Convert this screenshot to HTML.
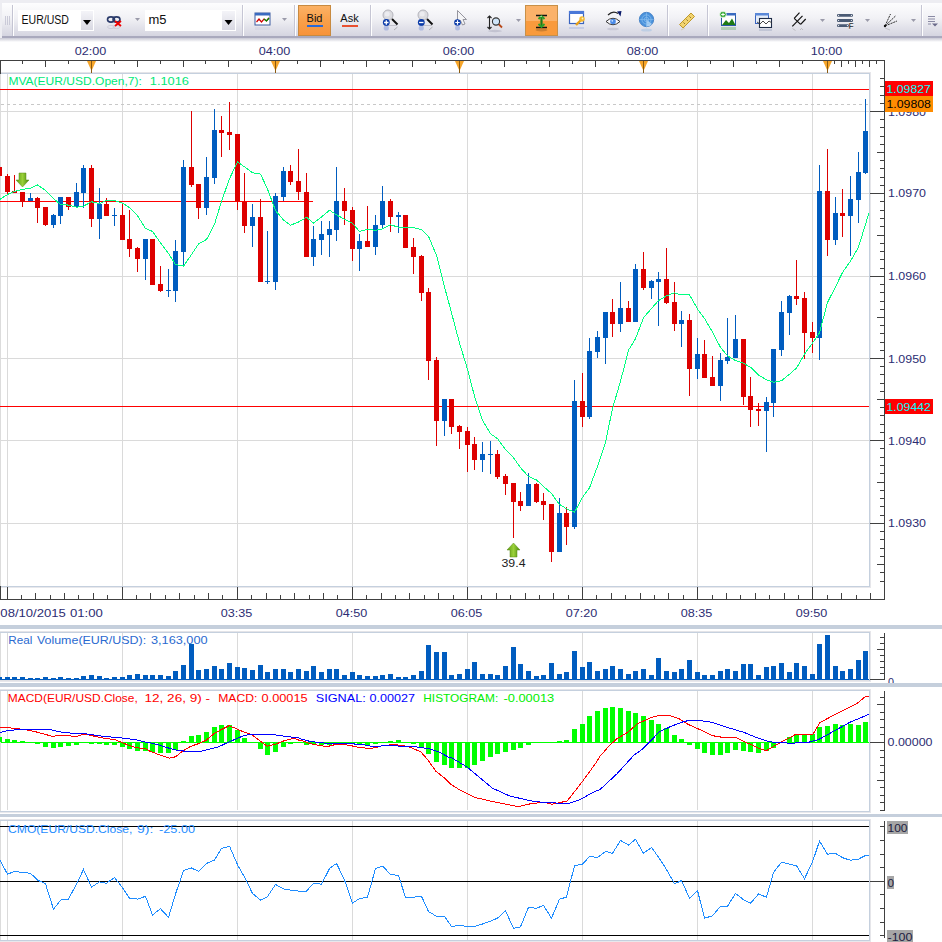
<!DOCTYPE html>
<html><head><meta charset="utf-8"><style>
html,body{margin:0;padding:0;background:#ffffff;width:942px;height:942px;overflow:hidden}
svg{display:block;font-family:"Liberation Sans", sans-serif}
</style></head><body>
<svg width="942" height="942" viewBox="0 0 942 942">
<rect x="0" y="0" width="942" height="942" fill="#ffffff"/>
<defs><linearGradient id="tbg" x1="0" y1="0" x2="0" y2="1"><stop offset="0" stop-color="#fdfdfe"/><stop offset="0.45" stop-color="#f1f1f5"/><stop offset="1" stop-color="#d3d3df"/></linearGradient>
<linearGradient id="org" x1="0" y1="0" x2="0" y2="1"><stop offset="0" stop-color="#fbb266"/><stop offset="0.5" stop-color="#f9a04a"/><stop offset="1" stop-color="#f7923a"/></linearGradient>
<linearGradient id="btng" x1="0" y1="0" x2="0" y2="1"><stop offset="0" stop-color="#f4f4f8"/><stop offset="1" stop-color="#d8d8e2"/></linearGradient>
<linearGradient id="shd" x1="0" y1="0" x2="0" y2="1"><stop offset="0" stop-color="#c8c8d4"/><stop offset="1" stop-color="#ffffff"/></linearGradient></defs>
<rect x="0" y="0" width="942" height="42" fill="#ededf2"/>
<rect x="0" y="38" width="942" height="4" fill="url(#shd)"/>
<rect x="2" y="3" width="940" height="34" fill="url(#tbg)"/>
<rect x="2" y="36" width="940" height="2" fill="#a9a9bd"/>
<rect x="5" y="16" width="1" height="9" fill="#cacad8"/>
<rect x="7" y="16" width="1" height="9" fill="#cacad8"/>
<rect x="9" y="16" width="1" height="9" fill="#cacad8"/>
<rect x="12" y="5" width="1" height="31" fill="#c4c4d2"/><rect x="13" y="5" width="1" height="31" fill="#ffffff"/>
<rect x="18" y="10" width="76" height="21" fill="#ffffff"/>
<rect x="81" y="11" width="12" height="19" fill="url(#btng)"/>
<polygon points="83,20 91,20 87,25" fill="#000"/>
<text x="21.5" y="24" font-size="12.5" fill="#101010" textLength="47.5" lengthAdjust="spacingAndGlyphs">EUR/USD</text>
<g fill="none" stroke="#2a3a6a" stroke-width="1.6"><ellipse cx="111" cy="19.5" rx="3.5" ry="2.6"/><ellipse cx="116.5" cy="19.5" rx="3.5" ry="2.6"/></g>
<g fill="none" stroke="#c0c0d0" stroke-width="1" opacity="0.6"><ellipse cx="111" cy="27" rx="3.5" ry="1.6"/><ellipse cx="116.5" cy="27" rx="3.5" ry="1.6"/></g>
<g stroke="#ee0000" stroke-width="1.8"><line x1="115" y1="21" x2="121" y2="26"/><line x1="121" y1="21" x2="115" y2="26"/></g>
<polygon points="135,18 140,18 137.5,21" fill="#9a9aaa"/>
<rect x="145" y="10" width="91" height="21" fill="#ffffff"/>
<rect x="222" y="11" width="13" height="19" fill="url(#btng)"/>
<polygon points="224.5,20 232.5,20 228.5,25" fill="#000"/>
<text x="148.5" y="24" font-size="12.5" fill="#101010" textLength="18" lengthAdjust="spacingAndGlyphs">m5</text>
<rect x="242" y="5" width="1" height="31" fill="#c6c6d4"/><rect x="243" y="5" width="1" height="31" fill="#ffffff"/>
<rect x="294" y="5" width="1" height="31" fill="#c6c6d4"/><rect x="295" y="5" width="1" height="31" fill="#ffffff"/>
<rect x="370" y="5" width="1" height="31" fill="#c6c6d4"/><rect x="371" y="5" width="1" height="31" fill="#ffffff"/>
<rect x="667" y="5" width="1" height="31" fill="#c6c6d4"/><rect x="668" y="5" width="1" height="31" fill="#ffffff"/>
<rect x="707" y="5" width="1" height="31" fill="#c6c6d4"/><rect x="708" y="5" width="1" height="31" fill="#ffffff"/>
<rect x="921" y="5" width="1" height="31" fill="#c6c6d4"/><rect x="922" y="5" width="1" height="31" fill="#ffffff"/>
<rect x="255" y="13" width="15" height="12" fill="#ffffff" stroke="#3a5aa0" stroke-width="1"/>
<rect x="255" y="13" width="15" height="2.5" fill="#3a6ac0"/>
<polyline points="256.5,22 259,19 261.5,22 264,19 266.5,21 269,18" fill="none" stroke="#d00000" stroke-width="1.2"/>
<polyline points="264,19 266.5,21 269,18" fill="none" stroke="#008800" stroke-width="1.2"/>
<rect x="255" y="27" width="15" height="3" fill="#d0d0e0" opacity="0.5"/>
<polygon points="282,18 287,18 284.5,21" fill="#9a9aaa"/>
<rect x="298.5" y="5.5" width="32" height="30" fill="url(#org)" stroke="#c88a40" stroke-width="1"/>
<text x="314.5" y="22" font-size="11" fill="#101010" text-anchor="middle">Bid</text>
<rect x="307" y="25" width="16" height="2" fill="#2a6ad8"/>
<text x="349.5" y="22" font-size="11" fill="#101010" text-anchor="middle">Ask</text>
<rect x="342" y="25" width="16" height="2" fill="#e85030"/>
<line x1="387" y1="25.5" x2="397" y2="25.5" stroke="#b8b8c4" stroke-width="1" opacity="0.8"/>
<circle cx="388" cy="15" r="5" fill="#dcdce0" stroke="#b4b4bc" stroke-width="1"/>
<circle cx="387.2" cy="14" r="2.5" fill="#ececf0"/>
<line x1="392" y1="19" x2="397.5" y2="24.5" stroke="#111" stroke-width="1.9"/>
<circle cx="386.3" cy="22.5" r="3.4" fill="#0a3aa8"/>
<path d="M384.1,22.5 h4.4 M386.3,20.3 v4.4" stroke="#fff" stroke-width="1.3"/>
<circle cx="386.3" cy="28" r="2.6" fill="#7890d8" opacity="0.45"/>
<line x1="394" y1="30" x2="397.5" y2="27" stroke="#555" stroke-width="1" opacity="0.35"/>
<line x1="422" y1="25.5" x2="432" y2="25.5" stroke="#b8b8c4" stroke-width="1" opacity="0.8"/>
<circle cx="423" cy="15" r="5" fill="#dcdce0" stroke="#b4b4bc" stroke-width="1"/>
<circle cx="422.2" cy="14" r="2.5" fill="#ececf0"/>
<line x1="427" y1="19" x2="432.5" y2="24.5" stroke="#111" stroke-width="1.9"/>
<circle cx="421.3" cy="22.5" r="3.4" fill="#0a3aa8"/>
<path d="M419.1,22.5 h4.4" stroke="#fff" stroke-width="1.3"/>
<circle cx="421.3" cy="28" r="2.6" fill="#7890d8" opacity="0.45"/>
<line x1="429" y1="30" x2="432.5" y2="27" stroke="#555" stroke-width="1" opacity="0.35"/>
<polygon points="457.5,10.5 466.5,19.5 463,19.5 465,24 462.5,25 460.5,20.5 457.5,23" fill="#f4f4f6" stroke="#8a8a94" stroke-width="0.9"/>
<circle cx="457.5" cy="22.5" r="3.3" fill="#0a3aa8"/><path d="M455.3,22.5 h4.4 M457.5,20.3 v4.4" stroke="#fff" stroke-width="1.2"/>
<circle cx="457.5" cy="28" r="2.5" fill="#7890d8" opacity="0.45"/>
<path d="M489.5,16 v13 M487.5,18 l2,-2 l2,2 M487.5,27 l2,2 l2,-2" fill="none" stroke="#222" stroke-width="1.1"/>
<line x1="498.5" y1="24" x2="502" y2="27.5" stroke="#b84818" stroke-width="1.8"/>
<circle cx="496" cy="21.5" r="3.6" fill="#cfe4f8" stroke="#333" stroke-width="1.1"/>
<ellipse cx="495" cy="31" rx="7" ry="1.2" fill="#8888a0" opacity="0.3"/>
<polygon points="516,19 521,19 518.5,22" fill="#9a9aaa"/>
<rect x="525.5" y="5.5" width="32" height="30" fill="#f99a3c" stroke="#c89048" stroke-width="1"/>
<rect x="526" y="6" width="31" height="15" fill="#fbb26a"/>
<path d="M536,15.5 h11 M536,27.5 h11" stroke="#111" stroke-width="1.3" fill="none"/>
<path d="M541.5,16 v11" stroke="#1a7a1a" stroke-width="2.2" fill="none"/>
<path d="M538.5,19 l3,-3 l3,3 M538.5,24 l3,3 l3,-3" stroke="#2aa02a" stroke-width="1.8" fill="none"/>
<path d="M540.5,17 l1,-1" stroke="#ffffff" stroke-width="1"/>
<ellipse cx="541.5" cy="30" rx="6" ry="1.5" fill="#7a5020" opacity="0.35"/>
<rect x="569.5" y="11.5" width="14" height="12" fill="#ffffff" stroke="#3a64c0" stroke-width="1.2"/>
<rect x="569" y="11" width="15" height="3" fill="#4a78d8"/>
<path d="M576,25 l5,-5" stroke="#e8a018" stroke-width="2.4"/><circle cx="582" cy="19" r="2.7" fill="#f4b830"/><circle cx="582.5" cy="18.5" r="0.9" fill="#fff4c0"/>
<rect x="569" y="27" width="15" height="2" fill="#9ab0e0" opacity="0.4"/>
<path d="M606,21.5 q7,-6.5 14,0 q-7,6.5 -14,0 z" fill="#f8f8fc" stroke="#333" stroke-width="1"/>
<circle cx="613" cy="21.5" r="2.8" fill="#4a8ae8"/><circle cx="612.3" cy="20.8" r="0.9" fill="#c8e0ff"/>
<path d="M608,15 q5,-5 10,-1.5" fill="none" stroke="#222" stroke-width="1.2"/><polygon points="617,11.5 621.5,11 620.5,16.5" fill="#0a1a6a"/>
<ellipse cx="613" cy="29" rx="6" ry="1.3" fill="#a0a0b8" opacity="0.35"/>
<circle cx="646.5" cy="19.5" r="7.2" fill="#4a92dc" stroke="#3a78c0" stroke-width="0.8"/>
<path d="M646.5,19.5 L652,24 A7,7 0 0 1 646.5,26.5 z" fill="#bcdcf8" opacity="0.8"/>
<circle cx="646.5" cy="19.5" r="4.6" fill="none" stroke="#8cc0ee" stroke-width="0.7"/><circle cx="646.5" cy="19.5" r="2.2" fill="none" stroke="#8cc0ee" stroke-width="0.7"/>
<path d="M639.5,19.5 h14 M646.5,12.5 v14" stroke="#8cc0ee" stroke-width="0.6"/>
<ellipse cx="646.5" cy="30" rx="5.5" ry="1.6" fill="#90b8e0" opacity="0.4"/>
<path d="M679.5,24.5 l11.5,-11.5 l3.5,3.5 l-11.5,11.5 z" fill="#f2d470" stroke="#b8901c" stroke-width="0.9"/>
<path d="M683.5,22.5 l1.3,1.3 M686.5,19.5 l1.3,1.3 M689.5,16.5 l1.3,1.3" stroke="#7a5a10" stroke-width="0.9"/>
<path d="M681,30 l4,-2" stroke="#c0a040" stroke-width="1" opacity="0.3"/>
<rect x="721.5" y="13.5" width="14" height="12" fill="#ffffff" stroke="#2a5aa8" stroke-width="1"/>
<rect x="721" y="13" width="15" height="2.5" fill="#3a6ac0"/>
<path d="M722,25 l4,-5 l3,3 l3,-4.5 l3.5,6.5 z" fill="#1e7a14"/>
<circle cx="723" cy="14.5" r="3.3" fill="#34a834" stroke="#fff" stroke-width="0.8"/><path d="M721.2,14.5 h3.6 M723,12.7 v3.6" stroke="#fff" stroke-width="1"/>
<rect x="721" y="27" width="15" height="3" fill="#3a9a3a" opacity="0.3"/>
<rect x="755.5" y="13.5" width="13" height="10" fill="#e4ecf8" stroke="#3a64c0" stroke-width="1"/>
<rect x="755" y="13" width="14" height="2.5" fill="#5a88d8"/>
<rect x="759.5" y="18.5" width="12" height="9" fill="#ffffff" stroke="#1e2c48" stroke-width="1.1"/>
<polyline points="757,22 760,24 763,21 766,24 769,21 772,23" fill="none" stroke="#333" stroke-width="0.9"/>
<rect x="759" y="29" width="13" height="2" fill="#8090b0" opacity="0.3"/>
<path d="M792.3,26.3 L797.4,21.2 M794.2,18.4 L800.6,24.4 M794.2,18.4 L799.5,12.6 M797.4,21.2 L802.5,15.8 M800.6,24.4 L805.7,19" fill="none" stroke="#111" stroke-width="1.2"/>
<path d="M792.5,28.5 l3,2 M800,30 l1.5,-1.5 l1.5,1.5" fill="none" stroke="#888" stroke-width="0.8" opacity="0.5"/>
<polygon points="820,19 825,19 822.5,22" fill="#9a9aaa"/>
<rect x="837" y="13.9" width="16" height="2.8" rx="1.2" fill="#4a5a74"/>
<circle cx="838.6" cy="15.3" r="0.6" fill="#fff"/><circle cx="851.4" cy="15.3" r="0.6" fill="#fff"/>
<rect x="837" y="19.1" width="16" height="2.8" rx="1.2" fill="#4a5a74"/>
<circle cx="838.6" cy="20.5" r="0.6" fill="#fff"/><circle cx="851.4" cy="20.5" r="0.6" fill="#fff"/>
<rect x="837" y="24.200000000000003" width="12" height="2.8" rx="1.2" fill="#4a5a74"/>
<circle cx="838.6" cy="25.6" r="0.6" fill="#fff"/><circle cx="847.4" cy="25.6" r="0.6" fill="#fff"/>
<text x="848.5" y="28.5" font-size="8.5" font-weight="bold" fill="#000" stroke="#fff" stroke-width="0.3">F</text>
<polygon points="865,19 870,19 867.5,22" fill="#9a9aaa"/>
<path d="M885,26 L890.5,14 M885,26 L896,15.5 M885,26 L897,21" fill="none" stroke="#333" stroke-width="1" stroke-dasharray="2.2,0.8"/>
<circle cx="885" cy="26" r="1.2" fill="#111"/>
<path d="M885,28 l5,2" stroke="#888" stroke-width="1" opacity="0.35"/>
<polygon points="911,19 916,19 913.5,22" fill="#9a9aaa"/>
<path d="M928,16.5 h7 M928,19 h7 M928,21.5 h7 M928,24 h3" stroke="#8a8aa4" stroke-width="1"/><polygon points="932,23.5 938,23.5 935,26.5" fill="#6a6a8a"/>
<g shape-rendering="crispEdges">
<line x1="7.5" y1="74" x2="7.5" y2="586" stroke="#dadada" stroke-width="1" />
<line x1="122.5" y1="74" x2="122.5" y2="586" stroke="#dadada" stroke-width="1" />
<line x1="237.5" y1="74" x2="237.5" y2="586" stroke="#dadada" stroke-width="1" />
<line x1="352.5" y1="74" x2="352.5" y2="586" stroke="#dadada" stroke-width="1" />
<line x1="467.5" y1="74" x2="467.5" y2="586" stroke="#dadada" stroke-width="1" />
<line x1="582.5" y1="74" x2="582.5" y2="586" stroke="#dadada" stroke-width="1" />
<line x1="697.5" y1="74" x2="697.5" y2="586" stroke="#dadada" stroke-width="1" />
<line x1="812.5" y1="74" x2="812.5" y2="586" stroke="#dadada" stroke-width="1" />
<line x1="7.5" y1="633" x2="7.5" y2="679" stroke="#dadada" stroke-width="1" />
<line x1="122.5" y1="633" x2="122.5" y2="679" stroke="#dadada" stroke-width="1" />
<line x1="237.5" y1="633" x2="237.5" y2="679" stroke="#dadada" stroke-width="1" />
<line x1="352.5" y1="633" x2="352.5" y2="679" stroke="#dadada" stroke-width="1" />
<line x1="467.5" y1="633" x2="467.5" y2="679" stroke="#dadada" stroke-width="1" />
<line x1="582.5" y1="633" x2="582.5" y2="679" stroke="#dadada" stroke-width="1" />
<line x1="697.5" y1="633" x2="697.5" y2="679" stroke="#dadada" stroke-width="1" />
<line x1="812.5" y1="633" x2="812.5" y2="679" stroke="#dadada" stroke-width="1" />
<line x1="7.5" y1="691" x2="7.5" y2="810" stroke="#dadada" stroke-width="1" />
<line x1="122.5" y1="691" x2="122.5" y2="810" stroke="#dadada" stroke-width="1" />
<line x1="237.5" y1="691" x2="237.5" y2="810" stroke="#dadada" stroke-width="1" />
<line x1="352.5" y1="691" x2="352.5" y2="810" stroke="#dadada" stroke-width="1" />
<line x1="467.5" y1="691" x2="467.5" y2="810" stroke="#dadada" stroke-width="1" />
<line x1="582.5" y1="691" x2="582.5" y2="810" stroke="#dadada" stroke-width="1" />
<line x1="697.5" y1="691" x2="697.5" y2="810" stroke="#dadada" stroke-width="1" />
<line x1="812.5" y1="691" x2="812.5" y2="810" stroke="#dadada" stroke-width="1" />
<line x1="7.5" y1="821" x2="7.5" y2="940" stroke="#dadada" stroke-width="1" />
<line x1="122.5" y1="821" x2="122.5" y2="940" stroke="#dadada" stroke-width="1" />
<line x1="237.5" y1="821" x2="237.5" y2="940" stroke="#dadada" stroke-width="1" />
<line x1="352.5" y1="821" x2="352.5" y2="940" stroke="#dadada" stroke-width="1" />
<line x1="467.5" y1="821" x2="467.5" y2="940" stroke="#dadada" stroke-width="1" />
<line x1="582.5" y1="821" x2="582.5" y2="940" stroke="#dadada" stroke-width="1" />
<line x1="697.5" y1="821" x2="697.5" y2="940" stroke="#dadada" stroke-width="1" />
<line x1="812.5" y1="821" x2="812.5" y2="940" stroke="#dadada" stroke-width="1" />
<line x1="1" y1="111.5" x2="869" y2="111.5" stroke="#dadada" stroke-width="1" />
<line x1="1" y1="193.5" x2="869" y2="193.5" stroke="#dadada" stroke-width="1" />
<line x1="1" y1="276.5" x2="869" y2="276.5" stroke="#dadada" stroke-width="1" />
<line x1="1" y1="358.5" x2="869" y2="358.5" stroke="#dadada" stroke-width="1" />
<line x1="1" y1="440.5" x2="869" y2="440.5" stroke="#dadada" stroke-width="1" />
<line x1="1" y1="523.5" x2="869" y2="523.5" stroke="#dadada" stroke-width="1" />
<line x1="1" y1="104.5" x2="869" y2="104.5" stroke="#c8c8c8" stroke-width="1" stroke-dasharray="3,3"/>
<line x1="0" y1="72.5" x2="871" y2="72.5" stroke="#e4e4e8" stroke-width="1" />
<line x1="0" y1="73.5" x2="870" y2="73.5" stroke="#c5d0de" stroke-width="1" />
<line x1="0" y1="586.5" x2="870" y2="586.5" stroke="#c5d0de" stroke-width="1" />
<line x1="0" y1="587.5" x2="871" y2="587.5" stroke="#e8e8ec" stroke-width="1" />
<line x1="869.5" y1="73" x2="869.5" y2="587" stroke="#c5d0de" stroke-width="1" />
<line x1="870.5" y1="72" x2="870.5" y2="588" stroke="#e6e6ea" stroke-width="1" />
<line x1="0.5" y1="74" x2="0.5" y2="586" stroke="#dcdcdc" stroke-width="1" />
<line x1="0" y1="631.5" x2="871" y2="631.5" stroke="#e4e4e8" stroke-width="1" />
<line x1="0" y1="632.5" x2="870" y2="632.5" stroke="#c5d0de" stroke-width="1" />
<line x1="0" y1="680.5" x2="870" y2="680.5" stroke="#e0e0e4" stroke-width="1" />
<line x1="0" y1="681.5" x2="871" y2="681.5" stroke="#e8e8ec" stroke-width="1" />
<line x1="869.5" y1="632" x2="869.5" y2="681" stroke="#c5d0de" stroke-width="1" />
<line x1="870.5" y1="631" x2="870.5" y2="682" stroke="#e6e6ea" stroke-width="1" />
<line x1="0.5" y1="633" x2="0.5" y2="680" stroke="#dcdcdc" stroke-width="1" />
<line x1="0" y1="689.5" x2="871" y2="689.5" stroke="#e4e4e8" stroke-width="1" />
<line x1="0" y1="690.5" x2="870" y2="690.5" stroke="#c5d0de" stroke-width="1" />
<line x1="0" y1="811.5" x2="870" y2="811.5" stroke="#c5d0de" stroke-width="1" />
<line x1="0" y1="812.5" x2="871" y2="812.5" stroke="#e8e8ec" stroke-width="1" />
<line x1="869.5" y1="690" x2="869.5" y2="812" stroke="#c5d0de" stroke-width="1" />
<line x1="870.5" y1="689" x2="870.5" y2="813" stroke="#e6e6ea" stroke-width="1" />
<line x1="0.5" y1="691" x2="0.5" y2="811" stroke="#dcdcdc" stroke-width="1" />
<line x1="0" y1="819.5" x2="871" y2="819.5" stroke="#e4e4e8" stroke-width="1" />
<line x1="0" y1="820.5" x2="870" y2="820.5" stroke="#c5d0de" stroke-width="1" />
<line x1="0" y1="940.5" x2="870" y2="940.5" stroke="#c5d0de" stroke-width="1" />
<line x1="0" y1="941.5" x2="871" y2="941.5" stroke="#e8e8ec" stroke-width="1" />
<line x1="869.5" y1="820" x2="869.5" y2="941" stroke="#c5d0de" stroke-width="1" />
<line x1="870.5" y1="819" x2="870.5" y2="942" stroke="#e6e6ea" stroke-width="1" />
<line x1="0.5" y1="821" x2="0.5" y2="940" stroke="#dcdcdc" stroke-width="1" />
<line x1="0" y1="89.5" x2="869" y2="89.5" stroke="#ff0000" stroke-width="1" />
<line x1="0" y1="406.5" x2="869" y2="406.5" stroke="#ff0000" stroke-width="1" />
<line x1="0" y1="201.5" x2="313" y2="201.5" stroke="#ff0000" stroke-width="1" />
</g>
<g shape-rendering="crispEdges">
<rect x="-1" y="167" width="1" height="9" fill="#dd0000" />
<rect x="-3" y="167" width="5" height="9" fill="#dd0000" />
<rect x="7" y="174" width="1" height="21" fill="#dd0000" />
<rect x="5" y="176" width="5" height="16" fill="#dd0000" />
<rect x="14" y="175" width="1" height="18" fill="#dd0000" />
<rect x="12" y="191" width="5" height="2" fill="#dd0000" />
<rect x="22" y="192" width="1" height="15" fill="#dd0000" />
<rect x="20" y="192" width="5" height="10" fill="#dd0000" />
<rect x="30" y="193" width="1" height="8" fill="#005cbf" />
<rect x="28" y="198" width="5" height="3" fill="#005cbf" />
<rect x="37" y="197" width="1" height="26" fill="#dd0000" />
<rect x="35" y="198" width="5" height="10" fill="#dd0000" />
<rect x="45" y="207" width="1" height="19" fill="#dd0000" />
<rect x="43" y="207" width="5" height="18" fill="#dd0000" />
<rect x="53" y="214" width="1" height="14" fill="#005cbf" />
<rect x="51" y="215" width="5" height="10" fill="#005cbf" />
<rect x="60" y="197" width="1" height="27" fill="#005cbf" />
<rect x="58" y="197" width="5" height="19" fill="#005cbf" />
<rect x="68" y="197" width="1" height="13" fill="#dd0000" />
<rect x="66" y="197" width="5" height="10" fill="#dd0000" />
<rect x="76" y="183" width="1" height="24" fill="#005cbf" />
<rect x="74" y="192" width="5" height="15" fill="#005cbf" />
<rect x="83" y="165" width="1" height="43" fill="#005cbf" />
<rect x="81" y="168" width="5" height="25" fill="#005cbf" />
<rect x="91" y="165" width="1" height="62" fill="#dd0000" />
<rect x="89" y="168" width="5" height="51" fill="#dd0000" />
<rect x="99" y="188" width="1" height="51" fill="#005cbf" />
<rect x="97" y="204" width="5" height="15" fill="#005cbf" />
<rect x="106" y="198" width="1" height="18" fill="#dd0000" />
<rect x="104" y="204" width="5" height="12" fill="#dd0000" />
<rect x="114" y="208" width="1" height="18" fill="#005cbf" />
<rect x="112" y="215" width="5" height="1" fill="#005cbf" />
<rect x="122" y="203" width="1" height="37" fill="#dd0000" />
<rect x="120" y="215" width="5" height="25" fill="#dd0000" />
<rect x="129" y="210" width="1" height="47" fill="#dd0000" />
<rect x="127" y="239" width="5" height="10" fill="#dd0000" />
<rect x="137" y="247" width="1" height="25" fill="#dd0000" />
<rect x="135" y="248" width="5" height="11" fill="#dd0000" />
<rect x="145" y="239" width="1" height="41" fill="#005cbf" />
<rect x="143" y="239" width="5" height="20" fill="#005cbf" />
<rect x="152" y="239" width="1" height="46" fill="#dd0000" />
<rect x="150" y="239" width="5" height="46" fill="#dd0000" />
<rect x="160" y="266" width="1" height="26" fill="#dd0000" />
<rect x="158" y="284" width="5" height="7" fill="#dd0000" />
<rect x="168" y="269" width="1" height="28" fill="#005cbf" />
<rect x="166" y="290" width="5" height="1" fill="#005cbf" />
<rect x="175" y="240" width="1" height="62" fill="#005cbf" />
<rect x="173" y="251" width="5" height="40" fill="#005cbf" />
<rect x="183" y="160" width="1" height="106" fill="#005cbf" />
<rect x="181" y="167" width="5" height="85" fill="#005cbf" />
<rect x="191" y="111" width="1" height="76" fill="#dd0000" />
<rect x="189" y="167" width="5" height="18" fill="#dd0000" />
<rect x="198" y="184" width="1" height="35" fill="#dd0000" />
<rect x="196" y="184" width="5" height="24" fill="#dd0000" />
<rect x="206" y="157" width="1" height="58" fill="#005cbf" />
<rect x="204" y="177" width="5" height="31" fill="#005cbf" />
<rect x="214" y="109" width="1" height="75" fill="#005cbf" />
<rect x="212" y="130" width="5" height="48" fill="#005cbf" />
<rect x="221" y="116" width="1" height="41" fill="#dd0000" />
<rect x="219" y="130" width="5" height="3" fill="#dd0000" />
<rect x="229" y="102" width="1" height="48" fill="#dd0000" />
<rect x="227" y="132" width="5" height="3" fill="#dd0000" />
<rect x="237" y="134" width="1" height="76" fill="#dd0000" />
<rect x="235" y="134" width="5" height="67" fill="#dd0000" />
<rect x="244" y="173" width="1" height="60" fill="#dd0000" />
<rect x="242" y="202" width="5" height="24" fill="#dd0000" />
<rect x="252" y="204" width="1" height="43" fill="#005cbf" />
<rect x="250" y="217" width="5" height="9" fill="#005cbf" />
<rect x="260" y="199" width="1" height="83" fill="#dd0000" />
<rect x="258" y="217" width="5" height="65" fill="#dd0000" />
<rect x="267" y="231" width="1" height="53" fill="#005cbf" />
<rect x="265" y="281" width="5" height="1" fill="#005cbf" />
<rect x="275" y="193" width="1" height="97" fill="#005cbf" />
<rect x="273" y="196" width="5" height="86" fill="#005cbf" />
<rect x="283" y="167" width="1" height="34" fill="#005cbf" />
<rect x="281" y="171" width="5" height="26" fill="#005cbf" />
<rect x="290" y="165" width="1" height="20" fill="#dd0000" />
<rect x="288" y="171" width="5" height="11" fill="#dd0000" />
<rect x="298" y="149" width="1" height="51" fill="#dd0000" />
<rect x="296" y="181" width="5" height="11" fill="#dd0000" />
<rect x="306" y="173" width="1" height="84" fill="#dd0000" />
<rect x="304" y="192" width="5" height="65" fill="#dd0000" />
<rect x="313" y="226" width="1" height="40" fill="#005cbf" />
<rect x="311" y="239" width="5" height="18" fill="#005cbf" />
<rect x="321" y="221" width="1" height="34" fill="#005cbf" />
<rect x="319" y="234" width="5" height="6" fill="#005cbf" />
<rect x="329" y="221" width="1" height="36" fill="#005cbf" />
<rect x="327" y="229" width="5" height="6" fill="#005cbf" />
<rect x="336" y="167" width="1" height="74" fill="#005cbf" />
<rect x="334" y="201" width="5" height="29" fill="#005cbf" />
<rect x="344" y="188" width="1" height="37" fill="#dd0000" />
<rect x="342" y="201" width="5" height="10" fill="#dd0000" />
<rect x="352" y="207" width="1" height="54" fill="#dd0000" />
<rect x="350" y="210" width="5" height="39" fill="#dd0000" />
<rect x="359" y="234" width="1" height="37" fill="#005cbf" />
<rect x="357" y="241" width="5" height="8" fill="#005cbf" />
<rect x="367" y="206" width="1" height="41" fill="#dd0000" />
<rect x="365" y="241" width="5" height="6" fill="#dd0000" />
<rect x="375" y="215" width="1" height="40" fill="#005cbf" />
<rect x="373" y="225" width="5" height="22" fill="#005cbf" />
<rect x="382" y="186" width="1" height="42" fill="#005cbf" />
<rect x="380" y="201" width="5" height="24" fill="#005cbf" />
<rect x="390" y="199" width="1" height="33" fill="#dd0000" />
<rect x="388" y="201" width="5" height="16" fill="#dd0000" />
<rect x="398" y="212" width="1" height="21" fill="#005cbf" />
<rect x="396" y="215" width="5" height="2" fill="#005cbf" />
<rect x="405" y="215" width="1" height="33" fill="#dd0000" />
<rect x="403" y="215" width="5" height="33" fill="#dd0000" />
<rect x="413" y="238" width="1" height="36" fill="#dd0000" />
<rect x="411" y="247" width="5" height="10" fill="#dd0000" />
<rect x="421" y="255" width="1" height="46" fill="#dd0000" />
<rect x="419" y="256" width="5" height="37" fill="#dd0000" />
<rect x="428" y="288" width="1" height="92" fill="#dd0000" />
<rect x="426" y="292" width="5" height="69" fill="#dd0000" />
<rect x="436" y="357" width="1" height="89" fill="#dd0000" />
<rect x="434" y="360" width="5" height="61" fill="#dd0000" />
<rect x="444" y="399" width="1" height="37" fill="#005cbf" />
<rect x="442" y="399" width="5" height="22" fill="#005cbf" />
<rect x="451" y="399" width="1" height="35" fill="#dd0000" />
<rect x="449" y="399" width="5" height="28" fill="#dd0000" />
<rect x="459" y="425" width="1" height="24" fill="#dd0000" />
<rect x="457" y="426" width="5" height="6" fill="#dd0000" />
<rect x="467" y="427" width="1" height="45" fill="#dd0000" />
<rect x="465" y="431" width="5" height="14" fill="#dd0000" />
<rect x="474" y="437" width="1" height="33" fill="#dd0000" />
<rect x="472" y="444" width="5" height="16" fill="#dd0000" />
<rect x="482" y="442" width="1" height="30" fill="#005cbf" />
<rect x="480" y="454" width="5" height="6" fill="#005cbf" />
<rect x="490" y="441" width="1" height="33" fill="#005cbf" />
<rect x="488" y="454" width="5" height="1" fill="#005cbf" />
<rect x="497" y="450" width="1" height="29" fill="#dd0000" />
<rect x="495" y="454" width="5" height="23" fill="#dd0000" />
<rect x="505" y="474" width="1" height="21" fill="#dd0000" />
<rect x="503" y="476" width="5" height="8" fill="#dd0000" />
<rect x="513" y="483" width="1" height="55" fill="#dd0000" />
<rect x="511" y="483" width="5" height="19" fill="#dd0000" />
<rect x="520" y="492" width="1" height="19" fill="#dd0000" />
<rect x="518" y="501" width="5" height="5" fill="#dd0000" />
<rect x="528" y="473" width="1" height="33" fill="#005cbf" />
<rect x="526" y="484" width="5" height="22" fill="#005cbf" />
<rect x="536" y="483" width="1" height="20" fill="#dd0000" />
<rect x="534" y="484" width="5" height="18" fill="#dd0000" />
<rect x="543" y="493" width="1" height="27" fill="#dd0000" />
<rect x="541" y="501" width="5" height="4" fill="#dd0000" />
<rect x="551" y="504" width="1" height="58" fill="#dd0000" />
<rect x="549" y="504" width="5" height="48" fill="#dd0000" />
<rect x="559" y="498" width="1" height="54" fill="#005cbf" />
<rect x="557" y="513" width="5" height="39" fill="#005cbf" />
<rect x="566" y="507" width="1" height="38" fill="#dd0000" />
<rect x="564" y="513" width="5" height="14" fill="#dd0000" />
<rect x="574" y="380" width="1" height="149" fill="#005cbf" />
<rect x="572" y="401" width="5" height="126" fill="#005cbf" />
<rect x="582" y="373" width="1" height="54" fill="#dd0000" />
<rect x="580" y="401" width="5" height="16" fill="#dd0000" />
<rect x="589" y="338" width="1" height="81" fill="#005cbf" />
<rect x="587" y="351" width="5" height="66" fill="#005cbf" />
<rect x="597" y="331" width="1" height="27" fill="#005cbf" />
<rect x="595" y="337" width="5" height="15" fill="#005cbf" />
<rect x="605" y="312" width="1" height="52" fill="#005cbf" />
<rect x="603" y="312" width="5" height="26" fill="#005cbf" />
<rect x="612" y="299" width="1" height="38" fill="#dd0000" />
<rect x="610" y="312" width="5" height="12" fill="#dd0000" />
<rect x="620" y="282" width="1" height="50" fill="#005cbf" />
<rect x="618" y="308" width="5" height="16" fill="#005cbf" />
<rect x="628" y="301" width="1" height="21" fill="#dd0000" />
<rect x="626" y="308" width="5" height="14" fill="#dd0000" />
<rect x="635" y="264" width="1" height="58" fill="#005cbf" />
<rect x="633" y="269" width="5" height="53" fill="#005cbf" />
<rect x="643" y="252" width="1" height="38" fill="#dd0000" />
<rect x="641" y="269" width="5" height="19" fill="#dd0000" />
<rect x="651" y="280" width="1" height="19" fill="#005cbf" />
<rect x="649" y="281" width="5" height="7" fill="#005cbf" />
<rect x="658" y="272" width="1" height="54" fill="#005cbf" />
<rect x="656" y="279" width="5" height="3" fill="#005cbf" />
<rect x="666" y="248" width="1" height="56" fill="#dd0000" />
<rect x="664" y="279" width="5" height="24" fill="#dd0000" />
<rect x="674" y="282" width="1" height="49" fill="#dd0000" />
<rect x="672" y="302" width="5" height="22" fill="#dd0000" />
<rect x="681" y="311" width="1" height="36" fill="#005cbf" />
<rect x="679" y="320" width="5" height="4" fill="#005cbf" />
<rect x="689" y="314" width="1" height="82" fill="#dd0000" />
<rect x="687" y="320" width="5" height="49" fill="#dd0000" />
<rect x="697" y="338" width="1" height="41" fill="#005cbf" />
<rect x="695" y="354" width="5" height="15" fill="#005cbf" />
<rect x="704" y="340" width="1" height="38" fill="#dd0000" />
<rect x="702" y="354" width="5" height="24" fill="#dd0000" />
<rect x="712" y="356" width="1" height="30" fill="#dd0000" />
<rect x="710" y="377" width="5" height="9" fill="#dd0000" />
<rect x="720" y="353" width="1" height="48" fill="#005cbf" />
<rect x="718" y="360" width="5" height="26" fill="#005cbf" />
<rect x="727" y="318" width="1" height="46" fill="#005cbf" />
<rect x="725" y="357" width="5" height="4" fill="#005cbf" />
<rect x="735" y="315" width="1" height="43" fill="#005cbf" />
<rect x="733" y="339" width="5" height="19" fill="#005cbf" />
<rect x="743" y="339" width="1" height="66" fill="#dd0000" />
<rect x="741" y="339" width="5" height="58" fill="#dd0000" />
<rect x="750" y="377" width="1" height="50" fill="#dd0000" />
<rect x="748" y="396" width="5" height="14" fill="#dd0000" />
<rect x="758" y="403" width="1" height="23" fill="#dd0000" />
<rect x="756" y="409" width="5" height="2" fill="#dd0000" />
<rect x="766" y="397" width="1" height="55" fill="#005cbf" />
<rect x="764" y="402" width="5" height="9" fill="#005cbf" />
<rect x="773" y="349" width="1" height="68" fill="#005cbf" />
<rect x="771" y="349" width="5" height="54" fill="#005cbf" />
<rect x="781" y="301" width="1" height="55" fill="#005cbf" />
<rect x="779" y="312" width="5" height="38" fill="#005cbf" />
<rect x="789" y="295" width="1" height="40" fill="#005cbf" />
<rect x="787" y="296" width="5" height="17" fill="#005cbf" />
<rect x="796" y="260" width="1" height="45" fill="#dd0000" />
<rect x="794" y="296" width="5" height="3" fill="#dd0000" />
<rect x="804" y="292" width="1" height="67" fill="#dd0000" />
<rect x="802" y="298" width="5" height="35" fill="#dd0000" />
<rect x="812" y="322" width="1" height="31" fill="#dd0000" />
<rect x="810" y="332" width="5" height="6" fill="#dd0000" />
<rect x="819" y="165" width="1" height="195" fill="#005cbf" />
<rect x="817" y="191" width="5" height="147" fill="#005cbf" />
<rect x="827" y="149" width="1" height="107" fill="#dd0000" />
<rect x="825" y="191" width="5" height="49" fill="#dd0000" />
<rect x="835" y="197" width="1" height="48" fill="#005cbf" />
<rect x="833" y="213" width="5" height="27" fill="#005cbf" />
<rect x="842" y="189" width="1" height="48" fill="#dd0000" />
<rect x="840" y="213" width="5" height="3" fill="#dd0000" />
<rect x="850" y="176" width="1" height="80" fill="#005cbf" />
<rect x="848" y="199" width="5" height="17" fill="#005cbf" />
<rect x="858" y="152" width="1" height="71" fill="#005cbf" />
<rect x="856" y="172" width="5" height="28" fill="#005cbf" />
<rect x="865" y="99" width="1" height="75" fill="#005cbf" />
<rect x="863" y="131" width="5" height="42" fill="#005cbf" />
</g>
<polyline fill="none" stroke="#00ff80" stroke-width="1" shape-rendering="crispEdges" points="0.0,199.3 7.5,194.5 14.5,191.4 22.5,189.3 30.5,188.2 37.5,185.0 45.5,190.4 53.5,198.6 60.5,204.3 68.5,205.1 76.5,207.2 83.5,206.1 91.5,201.8 99.5,203.5 106.5,200.5 114.5,200.5 122.5,203.1 129.5,207.7 137.5,215.6 145.5,228.5 152.5,231.4 160.5,242.8 168.5,253.5 175.5,264.4 183.5,266.2 191.5,254.6 198.5,244.0 206.5,239.5 214.5,224.4 221.5,201.4 229.5,178.7 237.5,161.9 244.5,166.8 252.5,172.8 260.5,174.1 267.5,189.0 275.5,210.6 283.5,219.9 290.5,225.2 298.5,222.1 306.5,217.3 313.5,223.0 321.5,217.0 329.5,210.2 336.5,214.9 344.5,219.2 352.5,223.4 359.5,231.5 367.5,229.3 375.5,230.3 382.5,228.9 390.5,224.9 398.5,227.1 405.5,227.8 413.5,227.6 421.5,229.7 428.5,236.2 436.5,255.4 444.5,286.8 451.5,312.8 459.5,343.0 467.5,369.3 474.5,396.2 482.5,420.2 490.5,433.8 497.5,438.6 505.5,449.6 513.5,457.7 520.5,467.7 528.5,476.5 536.5,479.9 543.5,486.5 551.5,493.6 559.5,504.4 566.5,508.7 574.5,512.3 582.5,497.4 589.5,487.8 597.5,466.4 605.5,442.7 612.5,408.4 620.5,381.4 628.5,350.2 635.5,338.8 643.5,317.7 651.5,308.5 658.5,300.6 666.5,295.8 674.5,292.8 681.5,295.0 689.5,294.8 697.5,309.0 704.5,318.5 712.5,332.1 720.5,347.4 727.5,355.7 735.5,360.6 743.5,363.3 750.5,367.2 758.5,375.0 766.5,379.9 773.5,382.3 781.5,380.7 789.5,374.2 796.5,368.1 804.5,354.1 812.5,343.1 819.5,332.7 827.5,302.5 835.5,286.8 842.5,272.5 850.5,261.1 858.5,247.1 865.5,224.3 869.0,212.9"/>
<defs><linearGradient id="ga" x1="0" y1="0" x2="1" y2="0"><stop offset="0" stop-color="#5a9a10"/><stop offset="0.5" stop-color="#9ad03a"/><stop offset="1" stop-color="#4a8a08"/></linearGradient></defs>
<polygon points="19,173 26,173 26,180 29,180 22.5,187 16,180 19,180" fill="url(#ga)" stroke="#5a8a1a" stroke-width="0.5"/>
<polygon points="513.5,543 520,550 517,550 517,557 510,557 510,550 507,550" fill="url(#ga)" stroke="#5a8a1a" stroke-width="0.5"/>
<text x="513.5" y="567" font-size="11.5" fill="#202020" text-anchor="middle" textLength="24" lengthAdjust="spacingAndGlyphs" >39.4</text>
<text x="8.4" y="85" font-size="11.5" fill="#00e878" text-anchor="start" textLength="133.5" lengthAdjust="spacingAndGlyphs" >MVA(EUR/USD.Open,7):</text>
<text x="149.8" y="85" font-size="11.5" fill="#00e878" text-anchor="start" textLength="39.2" lengthAdjust="spacingAndGlyphs" >1.1016</text>
<g shape-rendering="crispEdges">
<line x1="0" y1="60.5" x2="885" y2="60.5" stroke="#404040" stroke-width="1" />
<line x1="0.5" y1="60" x2="0.5" y2="74" stroke="#404040" stroke-width="1" />
<line x1="884.5" y1="60" x2="884.5" y2="600" stroke="#404040" stroke-width="1" />
<line x1="0" y1="599.5" x2="885" y2="599.5" stroke="#404040" stroke-width="1" />
<line x1="0.5" y1="586" x2="0.5" y2="600" stroke="#404040" stroke-width="1" />
<line x1="22.5" y1="61" x2="22.5" y2="64" stroke="#404040" stroke-width="1" />
<line x1="45.5" y1="61" x2="45.5" y2="67" stroke="#404040" stroke-width="1" />
<line x1="68.5" y1="61" x2="68.5" y2="64" stroke="#404040" stroke-width="1" />
<line x1="114.5" y1="61" x2="114.5" y2="64" stroke="#404040" stroke-width="1" />
<line x1="137.5" y1="61" x2="137.5" y2="67" stroke="#404040" stroke-width="1" />
<line x1="160.5" y1="61" x2="160.5" y2="64" stroke="#404040" stroke-width="1" />
<line x1="183.5" y1="61" x2="183.5" y2="67" stroke="#404040" stroke-width="1" />
<line x1="205.5" y1="61" x2="205.5" y2="64" stroke="#404040" stroke-width="1" />
<line x1="228.5" y1="61" x2="228.5" y2="67" stroke="#404040" stroke-width="1" />
<line x1="251.5" y1="61" x2="251.5" y2="64" stroke="#404040" stroke-width="1" />
<line x1="297.5" y1="61" x2="297.5" y2="64" stroke="#404040" stroke-width="1" />
<line x1="320.5" y1="61" x2="320.5" y2="67" stroke="#404040" stroke-width="1" />
<line x1="343.5" y1="61" x2="343.5" y2="64" stroke="#404040" stroke-width="1" />
<line x1="366.5" y1="61" x2="366.5" y2="67" stroke="#404040" stroke-width="1" />
<line x1="389.5" y1="61" x2="389.5" y2="64" stroke="#404040" stroke-width="1" />
<line x1="412.5" y1="61" x2="412.5" y2="67" stroke="#404040" stroke-width="1" />
<line x1="435.5" y1="61" x2="435.5" y2="64" stroke="#404040" stroke-width="1" />
<line x1="481.5" y1="61" x2="481.5" y2="64" stroke="#404040" stroke-width="1" />
<line x1="504.5" y1="61" x2="504.5" y2="67" stroke="#404040" stroke-width="1" />
<line x1="526.5" y1="61" x2="526.5" y2="64" stroke="#404040" stroke-width="1" />
<line x1="549.5" y1="61" x2="549.5" y2="67" stroke="#404040" stroke-width="1" />
<line x1="572.5" y1="61" x2="572.5" y2="64" stroke="#404040" stroke-width="1" />
<line x1="595.5" y1="61" x2="595.5" y2="67" stroke="#404040" stroke-width="1" />
<line x1="618.5" y1="61" x2="618.5" y2="64" stroke="#404040" stroke-width="1" />
<line x1="664.5" y1="61" x2="664.5" y2="64" stroke="#404040" stroke-width="1" />
<line x1="687.5" y1="61" x2="687.5" y2="67" stroke="#404040" stroke-width="1" />
<line x1="710.5" y1="61" x2="710.5" y2="64" stroke="#404040" stroke-width="1" />
<line x1="733.5" y1="61" x2="733.5" y2="67" stroke="#404040" stroke-width="1" />
<line x1="756.5" y1="61" x2="756.5" y2="64" stroke="#404040" stroke-width="1" />
<line x1="779.5" y1="61" x2="779.5" y2="67" stroke="#404040" stroke-width="1" />
<line x1="802.5" y1="61" x2="802.5" y2="64" stroke="#404040" stroke-width="1" />
<line x1="834.5" y1="61" x2="834.5" y2="64" stroke="#404040" stroke-width="1" />
<line x1="841.5" y1="61" x2="841.5" y2="67" stroke="#404040" stroke-width="1" />
<line x1="848.5" y1="61" x2="848.5" y2="64" stroke="#404040" stroke-width="1" />
<line x1="855.5" y1="61" x2="855.5" y2="67" stroke="#404040" stroke-width="1" />
<line x1="862.5" y1="61" x2="862.5" y2="64" stroke="#404040" stroke-width="1" />
<line x1="869.5" y1="61" x2="869.5" y2="67" stroke="#404040" stroke-width="1" />
<line x1="876.5" y1="61" x2="876.5" y2="64" stroke="#404040" stroke-width="1" />
<line x1="7.5" y1="587" x2="7.5" y2="599" stroke="#404040" stroke-width="1" />
<line x1="21.5" y1="595" x2="21.5" y2="599" stroke="#404040" stroke-width="1" />
<line x1="35.5" y1="593" x2="35.5" y2="599" stroke="#404040" stroke-width="1" />
<line x1="50.5" y1="595" x2="50.5" y2="599" stroke="#404040" stroke-width="1" />
<line x1="64.5" y1="593" x2="64.5" y2="599" stroke="#404040" stroke-width="1" />
<line x1="78.5" y1="595" x2="78.5" y2="599" stroke="#404040" stroke-width="1" />
<line x1="93.5" y1="593" x2="93.5" y2="599" stroke="#404040" stroke-width="1" />
<line x1="107.5" y1="595" x2="107.5" y2="599" stroke="#404040" stroke-width="1" />
<line x1="122.5" y1="587" x2="122.5" y2="599" stroke="#404040" stroke-width="1" />
<line x1="136.5" y1="595" x2="136.5" y2="599" stroke="#404040" stroke-width="1" />
<line x1="150.5" y1="593" x2="150.5" y2="599" stroke="#404040" stroke-width="1" />
<line x1="165.5" y1="595" x2="165.5" y2="599" stroke="#404040" stroke-width="1" />
<line x1="179.5" y1="593" x2="179.5" y2="599" stroke="#404040" stroke-width="1" />
<line x1="194.5" y1="595" x2="194.5" y2="599" stroke="#404040" stroke-width="1" />
<line x1="208.5" y1="593" x2="208.5" y2="599" stroke="#404040" stroke-width="1" />
<line x1="222.5" y1="595" x2="222.5" y2="599" stroke="#404040" stroke-width="1" />
<line x1="237.5" y1="587" x2="237.5" y2="599" stroke="#404040" stroke-width="1" />
<line x1="251.5" y1="595" x2="251.5" y2="599" stroke="#404040" stroke-width="1" />
<line x1="266.5" y1="593" x2="266.5" y2="599" stroke="#404040" stroke-width="1" />
<line x1="280.5" y1="595" x2="280.5" y2="599" stroke="#404040" stroke-width="1" />
<line x1="294.5" y1="593" x2="294.5" y2="599" stroke="#404040" stroke-width="1" />
<line x1="309.5" y1="595" x2="309.5" y2="599" stroke="#404040" stroke-width="1" />
<line x1="323.5" y1="593" x2="323.5" y2="599" stroke="#404040" stroke-width="1" />
<line x1="337.5" y1="595" x2="337.5" y2="599" stroke="#404040" stroke-width="1" />
<line x1="352.5" y1="587" x2="352.5" y2="599" stroke="#404040" stroke-width="1" />
<line x1="366.5" y1="595" x2="366.5" y2="599" stroke="#404040" stroke-width="1" />
<line x1="381.5" y1="593" x2="381.5" y2="599" stroke="#404040" stroke-width="1" />
<line x1="395.5" y1="595" x2="395.5" y2="599" stroke="#404040" stroke-width="1" />
<line x1="409.5" y1="593" x2="409.5" y2="599" stroke="#404040" stroke-width="1" />
<line x1="424.5" y1="595" x2="424.5" y2="599" stroke="#404040" stroke-width="1" />
<line x1="438.5" y1="593" x2="438.5" y2="599" stroke="#404040" stroke-width="1" />
<line x1="453.5" y1="595" x2="453.5" y2="599" stroke="#404040" stroke-width="1" />
<line x1="467.5" y1="587" x2="467.5" y2="599" stroke="#404040" stroke-width="1" />
<line x1="481.5" y1="595" x2="481.5" y2="599" stroke="#404040" stroke-width="1" />
<line x1="496.5" y1="593" x2="496.5" y2="599" stroke="#404040" stroke-width="1" />
<line x1="510.5" y1="595" x2="510.5" y2="599" stroke="#404040" stroke-width="1" />
<line x1="525.5" y1="593" x2="525.5" y2="599" stroke="#404040" stroke-width="1" />
<line x1="539.5" y1="595" x2="539.5" y2="599" stroke="#404040" stroke-width="1" />
<line x1="553.5" y1="593" x2="553.5" y2="599" stroke="#404040" stroke-width="1" />
<line x1="568.5" y1="595" x2="568.5" y2="599" stroke="#404040" stroke-width="1" />
<line x1="582.5" y1="587" x2="582.5" y2="599" stroke="#404040" stroke-width="1" />
<line x1="596.5" y1="595" x2="596.5" y2="599" stroke="#404040" stroke-width="1" />
<line x1="611.5" y1="593" x2="611.5" y2="599" stroke="#404040" stroke-width="1" />
<line x1="625.5" y1="595" x2="625.5" y2="599" stroke="#404040" stroke-width="1" />
<line x1="640.5" y1="593" x2="640.5" y2="599" stroke="#404040" stroke-width="1" />
<line x1="654.5" y1="595" x2="654.5" y2="599" stroke="#404040" stroke-width="1" />
<line x1="668.5" y1="593" x2="668.5" y2="599" stroke="#404040" stroke-width="1" />
<line x1="683.5" y1="595" x2="683.5" y2="599" stroke="#404040" stroke-width="1" />
<line x1="697.5" y1="587" x2="697.5" y2="599" stroke="#404040" stroke-width="1" />
<line x1="712.5" y1="595" x2="712.5" y2="599" stroke="#404040" stroke-width="1" />
<line x1="726.5" y1="593" x2="726.5" y2="599" stroke="#404040" stroke-width="1" />
<line x1="740.5" y1="595" x2="740.5" y2="599" stroke="#404040" stroke-width="1" />
<line x1="755.5" y1="593" x2="755.5" y2="599" stroke="#404040" stroke-width="1" />
<line x1="769.5" y1="595" x2="769.5" y2="599" stroke="#404040" stroke-width="1" />
<line x1="784.5" y1="593" x2="784.5" y2="599" stroke="#404040" stroke-width="1" />
<line x1="798.5" y1="595" x2="798.5" y2="599" stroke="#404040" stroke-width="1" />
<line x1="812.5" y1="587" x2="812.5" y2="599" stroke="#404040" stroke-width="1" />
<line x1="827.5" y1="595" x2="827.5" y2="599" stroke="#404040" stroke-width="1" />
<line x1="841.5" y1="593" x2="841.5" y2="599" stroke="#404040" stroke-width="1" />
<line x1="856.5" y1="595" x2="856.5" y2="599" stroke="#404040" stroke-width="1" />
<line x1="870.5" y1="593" x2="870.5" y2="599" stroke="#404040" stroke-width="1" />
<line x1="880" y1="581.5" x2="884" y2="581.5" stroke="#404040" stroke-width="1" />
<line x1="880" y1="572.5" x2="884" y2="572.5" stroke="#404040" stroke-width="1" />
<line x1="877" y1="564.5" x2="884" y2="564.5" stroke="#404040" stroke-width="1" />
<line x1="880" y1="556.5" x2="884" y2="556.5" stroke="#404040" stroke-width="1" />
<line x1="880" y1="548.5" x2="884" y2="548.5" stroke="#404040" stroke-width="1" />
<line x1="880" y1="539.5" x2="884" y2="539.5" stroke="#404040" stroke-width="1" />
<line x1="880" y1="531.5" x2="884" y2="531.5" stroke="#404040" stroke-width="1" />
<line x1="870" y1="523.5" x2="884" y2="523.5" stroke="#404040" stroke-width="1" />
<line x1="880" y1="515.5" x2="884" y2="515.5" stroke="#404040" stroke-width="1" />
<line x1="880" y1="506.5" x2="884" y2="506.5" stroke="#404040" stroke-width="1" />
<line x1="880" y1="498.5" x2="884" y2="498.5" stroke="#404040" stroke-width="1" />
<line x1="880" y1="490.5" x2="884" y2="490.5" stroke="#404040" stroke-width="1" />
<line x1="877" y1="482.5" x2="884" y2="482.5" stroke="#404040" stroke-width="1" />
<line x1="880" y1="473.5" x2="884" y2="473.5" stroke="#404040" stroke-width="1" />
<line x1="880" y1="465.5" x2="884" y2="465.5" stroke="#404040" stroke-width="1" />
<line x1="880" y1="457.5" x2="884" y2="457.5" stroke="#404040" stroke-width="1" />
<line x1="880" y1="448.5" x2="884" y2="448.5" stroke="#404040" stroke-width="1" />
<line x1="870" y1="440.5" x2="884" y2="440.5" stroke="#404040" stroke-width="1" />
<line x1="880" y1="432.5" x2="884" y2="432.5" stroke="#404040" stroke-width="1" />
<line x1="880" y1="424.5" x2="884" y2="424.5" stroke="#404040" stroke-width="1" />
<line x1="880" y1="415.5" x2="884" y2="415.5" stroke="#404040" stroke-width="1" />
<line x1="880" y1="407.5" x2="884" y2="407.5" stroke="#404040" stroke-width="1" />
<line x1="877" y1="399.5" x2="884" y2="399.5" stroke="#404040" stroke-width="1" />
<line x1="880" y1="391.5" x2="884" y2="391.5" stroke="#404040" stroke-width="1" />
<line x1="880" y1="383.5" x2="884" y2="383.5" stroke="#404040" stroke-width="1" />
<line x1="880" y1="374.5" x2="884" y2="374.5" stroke="#404040" stroke-width="1" />
<line x1="880" y1="366.5" x2="884" y2="366.5" stroke="#404040" stroke-width="1" />
<line x1="870" y1="358.5" x2="884" y2="358.5" stroke="#404040" stroke-width="1" />
<line x1="880" y1="350.5" x2="884" y2="350.5" stroke="#404040" stroke-width="1" />
<line x1="880" y1="342.5" x2="884" y2="342.5" stroke="#404040" stroke-width="1" />
<line x1="880" y1="333.5" x2="884" y2="333.5" stroke="#404040" stroke-width="1" />
<line x1="880" y1="325.5" x2="884" y2="325.5" stroke="#404040" stroke-width="1" />
<line x1="877" y1="317.5" x2="884" y2="317.5" stroke="#404040" stroke-width="1" />
<line x1="880" y1="309.5" x2="884" y2="309.5" stroke="#404040" stroke-width="1" />
<line x1="880" y1="301.5" x2="884" y2="301.5" stroke="#404040" stroke-width="1" />
<line x1="880" y1="292.5" x2="884" y2="292.5" stroke="#404040" stroke-width="1" />
<line x1="880" y1="284.5" x2="884" y2="284.5" stroke="#404040" stroke-width="1" />
<line x1="870" y1="276.5" x2="884" y2="276.5" stroke="#404040" stroke-width="1" />
<line x1="880" y1="268.5" x2="884" y2="268.5" stroke="#404040" stroke-width="1" />
<line x1="880" y1="259.5" x2="884" y2="259.5" stroke="#404040" stroke-width="1" />
<line x1="880" y1="251.5" x2="884" y2="251.5" stroke="#404040" stroke-width="1" />
<line x1="880" y1="243.5" x2="884" y2="243.5" stroke="#404040" stroke-width="1" />
<line x1="877" y1="235.5" x2="884" y2="235.5" stroke="#404040" stroke-width="1" />
<line x1="880" y1="226.5" x2="884" y2="226.5" stroke="#404040" stroke-width="1" />
<line x1="880" y1="218.5" x2="884" y2="218.5" stroke="#404040" stroke-width="1" />
<line x1="880" y1="210.5" x2="884" y2="210.5" stroke="#404040" stroke-width="1" />
<line x1="880" y1="201.5" x2="884" y2="201.5" stroke="#404040" stroke-width="1" />
<line x1="870" y1="193.5" x2="884" y2="193.5" stroke="#404040" stroke-width="1" />
<line x1="880" y1="185.5" x2="884" y2="185.5" stroke="#404040" stroke-width="1" />
<line x1="880" y1="177.5" x2="884" y2="177.5" stroke="#404040" stroke-width="1" />
<line x1="880" y1="168.5" x2="884" y2="168.5" stroke="#404040" stroke-width="1" />
<line x1="880" y1="160.5" x2="884" y2="160.5" stroke="#404040" stroke-width="1" />
<line x1="877" y1="152.5" x2="884" y2="152.5" stroke="#404040" stroke-width="1" />
<line x1="880" y1="144.5" x2="884" y2="144.5" stroke="#404040" stroke-width="1" />
<line x1="880" y1="136.5" x2="884" y2="136.5" stroke="#404040" stroke-width="1" />
<line x1="880" y1="127.5" x2="884" y2="127.5" stroke="#404040" stroke-width="1" />
<line x1="880" y1="119.5" x2="884" y2="119.5" stroke="#404040" stroke-width="1" />
<line x1="870" y1="111.5" x2="884" y2="111.5" stroke="#404040" stroke-width="1" />
<line x1="880" y1="103.5" x2="884" y2="103.5" stroke="#404040" stroke-width="1" />
<line x1="880" y1="95.5" x2="884" y2="95.5" stroke="#404040" stroke-width="1" />
<line x1="880" y1="86.5" x2="884" y2="86.5" stroke="#404040" stroke-width="1" />
<line x1="880" y1="78.5" x2="884" y2="78.5" stroke="#404040" stroke-width="1" />
</g>
<polygon points="87,61 96,61 91.5,71" fill="#f6a52a"/>
<line x1="91.5" y1="61" x2="91.5" y2="73" stroke="#8a5a10" stroke-width="1" shape-rendering="crispEdges"/>
<polygon points="271,61 280,61 275.5,71" fill="#f6a52a"/>
<line x1="275.5" y1="61" x2="275.5" y2="73" stroke="#8a5a10" stroke-width="1" shape-rendering="crispEdges"/>
<polygon points="455,61 464,61 459.5,71" fill="#f6a52a"/>
<line x1="459.5" y1="61" x2="459.5" y2="73" stroke="#8a5a10" stroke-width="1" shape-rendering="crispEdges"/>
<polygon points="639,61 648,61 643.5,71" fill="#f6a52a"/>
<line x1="643.5" y1="61" x2="643.5" y2="73" stroke="#8a5a10" stroke-width="1" shape-rendering="crispEdges"/>
<polygon points="823,61 832,61 827.5,71" fill="#f6a52a"/>
<line x1="827.5" y1="61" x2="827.5" y2="73" stroke="#8a5a10" stroke-width="1" shape-rendering="crispEdges"/>
<text x="90.5" y="55" font-size="11" fill="#2c2c72" text-anchor="middle" textLength="31.6" lengthAdjust="spacingAndGlyphs" >02:00</text>
<text x="274.5" y="55" font-size="11" fill="#2c2c72" text-anchor="middle" textLength="31.6" lengthAdjust="spacingAndGlyphs" >04:00</text>
<text x="458.5" y="55" font-size="11" fill="#2c2c72" text-anchor="middle" textLength="31.6" lengthAdjust="spacingAndGlyphs" >06:00</text>
<text x="642.5" y="55" font-size="11" fill="#2c2c72" text-anchor="middle" textLength="31.6" lengthAdjust="spacingAndGlyphs" >08:00</text>
<text x="826.5" y="55" font-size="11" fill="#2c2c72" text-anchor="middle" textLength="31.6" lengthAdjust="spacingAndGlyphs" >10:00</text>
<text x="0.35" y="617" font-size="11" fill="#2c2c72" text-anchor="start" textLength="65.55" lengthAdjust="spacingAndGlyphs" >08/10/2015</text>
<text x="70.0" y="617" font-size="11" fill="#2c2c72" text-anchor="start" textLength="32.9" lengthAdjust="spacingAndGlyphs" >01:00</text>
<text x="236.5" y="617" font-size="11" fill="#2c2c72" text-anchor="middle" textLength="31.6" lengthAdjust="spacingAndGlyphs" >03:35</text>
<text x="351.5" y="617" font-size="11" fill="#2c2c72" text-anchor="middle" textLength="31.6" lengthAdjust="spacingAndGlyphs" >04:50</text>
<text x="466.5" y="617" font-size="11" fill="#2c2c72" text-anchor="middle" textLength="31.6" lengthAdjust="spacingAndGlyphs" >06:05</text>
<text x="581.5" y="617" font-size="11" fill="#2c2c72" text-anchor="middle" textLength="31.6" lengthAdjust="spacingAndGlyphs" >07:20</text>
<text x="696.5" y="617" font-size="11" fill="#2c2c72" text-anchor="middle" textLength="31.6" lengthAdjust="spacingAndGlyphs" >08:35</text>
<text x="811.5" y="617" font-size="11" fill="#2c2c72" text-anchor="middle" textLength="31.6" lengthAdjust="spacingAndGlyphs" >09:50</text>
<text x="888" y="115.5" font-size="11" fill="#2c2c72" text-anchor="start" textLength="38" lengthAdjust="spacingAndGlyphs" >1.0980</text>
<text x="888" y="197.4" font-size="11" fill="#2c2c72" text-anchor="start" textLength="38" lengthAdjust="spacingAndGlyphs" >1.0970</text>
<text x="888" y="280.3" font-size="11" fill="#2c2c72" text-anchor="start" textLength="38" lengthAdjust="spacingAndGlyphs" >1.0960</text>
<text x="888" y="362.5" font-size="11" fill="#2c2c72" text-anchor="start" textLength="38" lengthAdjust="spacingAndGlyphs" >1.0950</text>
<text x="888" y="444.8" font-size="11" fill="#2c2c72" text-anchor="start" textLength="38" lengthAdjust="spacingAndGlyphs" >1.0940</text>
<text x="888" y="527" font-size="11" fill="#2c2c72" text-anchor="start" textLength="38" lengthAdjust="spacingAndGlyphs" >1.0930</text>
<rect x="885" y="81" width="48" height="15" fill="#ff0000" />
<text x="886.5" y="92.5" font-size="11" fill="#00ffff" text-anchor="start" textLength="44.4" lengthAdjust="spacingAndGlyphs" >1.09827</text>
<rect x="885" y="96" width="48" height="16" fill="#ff8c00" />
<text x="886.5" y="108" font-size="11" fill="#000000" text-anchor="start" textLength="44.4" lengthAdjust="spacingAndGlyphs" >1.09808</text>
<rect x="885" y="399" width="48" height="15" fill="#ff0000" />
<text x="886.5" y="410.5" font-size="11" fill="#00ffff" text-anchor="start" textLength="44.4" lengthAdjust="spacingAndGlyphs" >1.09442</text>
<rect x="0" y="625" width="942" height="4" fill="#c5cfdc" />
<rect x="0" y="683" width="942" height="4" fill="#c5cfdc" />
<rect x="0" y="814" width="942" height="3" fill="#c5cfdc" />
<g shape-rendering="crispEdges">
<rect x="-3" y="677" width="5" height="3" fill="#005cbf" />
<rect x="5" y="677" width="5" height="3" fill="#005cbf" />
<rect x="12" y="677" width="5" height="3" fill="#005cbf" />
<rect x="20" y="677" width="5" height="3" fill="#005cbf" />
<rect x="28" y="678" width="5" height="2" fill="#005cbf" />
<rect x="35" y="678" width="5" height="2" fill="#005cbf" />
<rect x="43" y="677" width="5" height="3" fill="#005cbf" />
<rect x="51" y="678" width="5" height="2" fill="#005cbf" />
<rect x="58" y="677" width="5" height="3" fill="#005cbf" />
<rect x="66" y="678" width="5" height="2" fill="#005cbf" />
<rect x="74" y="678" width="5" height="2" fill="#005cbf" />
<rect x="81" y="676" width="5" height="4" fill="#005cbf" />
<rect x="89" y="675" width="5" height="5" fill="#005cbf" />
<rect x="97" y="676" width="5" height="4" fill="#005cbf" />
<rect x="104" y="678" width="5" height="2" fill="#005cbf" />
<rect x="112" y="677" width="5" height="3" fill="#005cbf" />
<rect x="120" y="677" width="5" height="3" fill="#005cbf" />
<rect x="127" y="675" width="5" height="5" fill="#005cbf" />
<rect x="135" y="674" width="5" height="6" fill="#005cbf" />
<rect x="143" y="675" width="5" height="5" fill="#005cbf" />
<rect x="150" y="675" width="5" height="5" fill="#005cbf" />
<rect x="158" y="675" width="5" height="5" fill="#005cbf" />
<rect x="166" y="676" width="5" height="4" fill="#005cbf" />
<rect x="173" y="671" width="5" height="9" fill="#005cbf" />
<rect x="181" y="665" width="5" height="15" fill="#005cbf" />
<rect x="189" y="644" width="5" height="36" fill="#005cbf" />
<rect x="196" y="670" width="5" height="10" fill="#005cbf" />
<rect x="204" y="669" width="5" height="11" fill="#005cbf" />
<rect x="212" y="666" width="5" height="14" fill="#005cbf" />
<rect x="219" y="669" width="5" height="11" fill="#005cbf" />
<rect x="227" y="663" width="5" height="17" fill="#005cbf" />
<rect x="235" y="667" width="5" height="13" fill="#005cbf" />
<rect x="242" y="668" width="5" height="12" fill="#005cbf" />
<rect x="250" y="670" width="5" height="10" fill="#005cbf" />
<rect x="258" y="665" width="5" height="15" fill="#005cbf" />
<rect x="265" y="672" width="5" height="8" fill="#005cbf" />
<rect x="273" y="669" width="5" height="11" fill="#005cbf" />
<rect x="281" y="669" width="5" height="11" fill="#005cbf" />
<rect x="288" y="672" width="5" height="8" fill="#005cbf" />
<rect x="296" y="669" width="5" height="11" fill="#005cbf" />
<rect x="304" y="671" width="5" height="9" fill="#005cbf" />
<rect x="311" y="666" width="5" height="14" fill="#005cbf" />
<rect x="319" y="672" width="5" height="8" fill="#005cbf" />
<rect x="327" y="669" width="5" height="11" fill="#005cbf" />
<rect x="334" y="669" width="5" height="11" fill="#005cbf" />
<rect x="342" y="675" width="5" height="5" fill="#005cbf" />
<rect x="350" y="672" width="5" height="8" fill="#005cbf" />
<rect x="357" y="675" width="5" height="5" fill="#005cbf" />
<rect x="365" y="676" width="5" height="4" fill="#005cbf" />
<rect x="373" y="676" width="5" height="4" fill="#005cbf" />
<rect x="380" y="675" width="5" height="5" fill="#005cbf" />
<rect x="388" y="674" width="5" height="6" fill="#005cbf" />
<rect x="396" y="677" width="5" height="3" fill="#005cbf" />
<rect x="403" y="677" width="5" height="3" fill="#005cbf" />
<rect x="411" y="675" width="5" height="5" fill="#005cbf" />
<rect x="419" y="671" width="5" height="9" fill="#005cbf" />
<rect x="426" y="645" width="5" height="35" fill="#005cbf" />
<rect x="434" y="652" width="5" height="28" fill="#005cbf" />
<rect x="442" y="652" width="5" height="28" fill="#005cbf" />
<rect x="449" y="675" width="5" height="5" fill="#005cbf" />
<rect x="457" y="674" width="5" height="6" fill="#005cbf" />
<rect x="465" y="669" width="5" height="11" fill="#005cbf" />
<rect x="472" y="662" width="5" height="18" fill="#005cbf" />
<rect x="480" y="674" width="5" height="6" fill="#005cbf" />
<rect x="488" y="674" width="5" height="6" fill="#005cbf" />
<rect x="495" y="675" width="5" height="5" fill="#005cbf" />
<rect x="503" y="666" width="5" height="14" fill="#005cbf" />
<rect x="511" y="647" width="5" height="33" fill="#005cbf" />
<rect x="518" y="664" width="5" height="16" fill="#005cbf" />
<rect x="526" y="671" width="5" height="9" fill="#005cbf" />
<rect x="534" y="676" width="5" height="4" fill="#005cbf" />
<rect x="541" y="675" width="5" height="5" fill="#005cbf" />
<rect x="549" y="663" width="5" height="17" fill="#005cbf" />
<rect x="557" y="674" width="5" height="6" fill="#005cbf" />
<rect x="564" y="672" width="5" height="8" fill="#005cbf" />
<rect x="572" y="651" width="5" height="29" fill="#005cbf" />
<rect x="580" y="667" width="5" height="13" fill="#005cbf" />
<rect x="587" y="662" width="5" height="18" fill="#005cbf" />
<rect x="595" y="671" width="5" height="9" fill="#005cbf" />
<rect x="603" y="669" width="5" height="11" fill="#005cbf" />
<rect x="610" y="666" width="5" height="14" fill="#005cbf" />
<rect x="618" y="669" width="5" height="11" fill="#005cbf" />
<rect x="626" y="674" width="5" height="6" fill="#005cbf" />
<rect x="633" y="671" width="5" height="9" fill="#005cbf" />
<rect x="641" y="669" width="5" height="11" fill="#005cbf" />
<rect x="649" y="675" width="5" height="5" fill="#005cbf" />
<rect x="656" y="658" width="5" height="22" fill="#005cbf" />
<rect x="664" y="671" width="5" height="9" fill="#005cbf" />
<rect x="672" y="672" width="5" height="8" fill="#005cbf" />
<rect x="679" y="669" width="5" height="11" fill="#005cbf" />
<rect x="687" y="660" width="5" height="20" fill="#005cbf" />
<rect x="695" y="672" width="5" height="8" fill="#005cbf" />
<rect x="702" y="675" width="5" height="5" fill="#005cbf" />
<rect x="710" y="675" width="5" height="5" fill="#005cbf" />
<rect x="718" y="671" width="5" height="9" fill="#005cbf" />
<rect x="725" y="669" width="5" height="11" fill="#005cbf" />
<rect x="733" y="671" width="5" height="9" fill="#005cbf" />
<rect x="741" y="664" width="5" height="16" fill="#005cbf" />
<rect x="748" y="664" width="5" height="16" fill="#005cbf" />
<rect x="756" y="675" width="5" height="5" fill="#005cbf" />
<rect x="764" y="667" width="5" height="13" fill="#005cbf" />
<rect x="771" y="666" width="5" height="14" fill="#005cbf" />
<rect x="779" y="663" width="5" height="17" fill="#005cbf" />
<rect x="787" y="672" width="5" height="8" fill="#005cbf" />
<rect x="794" y="663" width="5" height="17" fill="#005cbf" />
<rect x="802" y="666" width="5" height="14" fill="#005cbf" />
<rect x="810" y="674" width="5" height="6" fill="#005cbf" />
<rect x="817" y="644" width="5" height="36" fill="#005cbf" />
<rect x="825" y="635" width="5" height="45" fill="#005cbf" />
<rect x="833" y="666" width="5" height="14" fill="#005cbf" />
<rect x="840" y="671" width="5" height="9" fill="#005cbf" />
<rect x="848" y="669" width="5" height="11" fill="#005cbf" />
<rect x="856" y="660" width="5" height="20" fill="#005cbf" />
<rect x="863" y="651" width="5" height="29" fill="#005cbf" />
<line x1="1" y1="679.5" x2="869" y2="679.5" stroke="#005cbf" stroke-width="1" />
<line x1="884.5" y1="633" x2="884.5" y2="680" stroke="#404040" stroke-width="1" />
<line x1="870" y1="679.5" x2="885" y2="679.5" stroke="#404040" stroke-width="1" />
<line x1="880" y1="673.5" x2="884" y2="673.5" stroke="#404040" stroke-width="1" />
<line x1="880" y1="667.5" x2="884" y2="667.5" stroke="#404040" stroke-width="1" />
<line x1="880" y1="661.5" x2="884" y2="661.5" stroke="#404040" stroke-width="1" />
<line x1="880" y1="655.5" x2="884" y2="655.5" stroke="#404040" stroke-width="1" />
<line x1="877" y1="649.5" x2="884" y2="649.5" stroke="#404040" stroke-width="1" />
<line x1="880" y1="643.5" x2="884" y2="643.5" stroke="#404040" stroke-width="1" />
<line x1="880" y1="637.5" x2="884" y2="637.5" stroke="#404040" stroke-width="1" />
</g>
<text x="8.3" y="644" font-size="11" fill="#2a6ad0" text-anchor="start" textLength="24.0" lengthAdjust="spacingAndGlyphs" >Real</text>
<text x="36.9" y="644" font-size="11" fill="#2a6ad0" text-anchor="start" textLength="109.3" lengthAdjust="spacingAndGlyphs" >Volume(EUR/USD):</text>
<text x="151.0" y="644" font-size="11" fill="#2a6ad0" text-anchor="start" textLength="56.6" lengthAdjust="spacingAndGlyphs" >3,163,000</text>
<text x="888" y="686" font-size="11" fill="#2c2c72" text-anchor="start" textLength="6" lengthAdjust="spacingAndGlyphs" >0</text>
<rect x="860" y="683" width="82" height="4" fill="#c5cfdc" />
<g shape-rendering="crispEdges">
<line x1="1" y1="742.5" x2="869" y2="742.5" stroke="#00ff00" stroke-width="1" />
<rect x="-3" y="737" width="5" height="5" fill="#00ff00" />
<rect x="5" y="739" width="5" height="3" fill="#00ff00" />
<rect x="12" y="740" width="5" height="2" fill="#00ff00" />
<rect x="20" y="741" width="5" height="1" fill="#00ff00" />
<rect x="35" y="743" width="5" height="1" fill="#00ff00" />
<rect x="43" y="743" width="5" height="4" fill="#00ff00" />
<rect x="51" y="743" width="5" height="5" fill="#00ff00" />
<rect x="58" y="743" width="5" height="4" fill="#00ff00" />
<rect x="66" y="743" width="5" height="3" fill="#00ff00" />
<rect x="74" y="743" width="5" height="2" fill="#00ff00" />
<rect x="89" y="743" width="5" height="1" fill="#00ff00" />
<rect x="97" y="743" width="5" height="1" fill="#00ff00" />
<rect x="104" y="743" width="5" height="2" fill="#00ff00" />
<rect x="112" y="743" width="5" height="2" fill="#00ff00" />
<rect x="120" y="743" width="5" height="4" fill="#00ff00" />
<rect x="127" y="743" width="5" height="6" fill="#00ff00" />
<rect x="135" y="743" width="5" height="8" fill="#00ff00" />
<rect x="143" y="743" width="5" height="8" fill="#00ff00" />
<rect x="150" y="743" width="5" height="9" fill="#00ff00" />
<rect x="158" y="743" width="5" height="10" fill="#00ff00" />
<rect x="166" y="743" width="5" height="10" fill="#00ff00" />
<rect x="173" y="743" width="5" height="7" fill="#00ff00" />
<rect x="181" y="741" width="5" height="1" fill="#00ff00" />
<rect x="189" y="736" width="5" height="6" fill="#00ff00" />
<rect x="196" y="735" width="5" height="7" fill="#00ff00" />
<rect x="204" y="732" width="5" height="10" fill="#00ff00" />
<rect x="212" y="727" width="5" height="15" fill="#00ff00" />
<rect x="219" y="725" width="5" height="17" fill="#00ff00" />
<rect x="227" y="725" width="5" height="17" fill="#00ff00" />
<rect x="235" y="730" width="5" height="12" fill="#00ff00" />
<rect x="242" y="738" width="5" height="4" fill="#00ff00" />
<rect x="258" y="743" width="5" height="6" fill="#00ff00" />
<rect x="265" y="743" width="5" height="12" fill="#00ff00" />
<rect x="273" y="743" width="5" height="9" fill="#00ff00" />
<rect x="281" y="743" width="5" height="4" fill="#00ff00" />
<rect x="288" y="743" width="5" height="1" fill="#00ff00" />
<rect x="304" y="743" width="5" height="2" fill="#00ff00" />
<rect x="311" y="743" width="5" height="1" fill="#00ff00" />
<rect x="319" y="743" width="5" height="2" fill="#00ff00" />
<rect x="327" y="743" width="5" height="2" fill="#00ff00" />
<rect x="334" y="743" width="5" height="1" fill="#00ff00" />
<rect x="350" y="743" width="5" height="1" fill="#00ff00" />
<rect x="357" y="743" width="5" height="1" fill="#00ff00" />
<rect x="365" y="743" width="5" height="2" fill="#00ff00" />
<rect x="373" y="743" width="5" height="1" fill="#00ff00" />
<rect x="388" y="741" width="5" height="1" fill="#00ff00" />
<rect x="396" y="740" width="5" height="2" fill="#00ff00" />
<rect x="411" y="743" width="5" height="1" fill="#00ff00" />
<rect x="419" y="743" width="5" height="5" fill="#00ff00" />
<rect x="426" y="743" width="5" height="11" fill="#00ff00" />
<rect x="434" y="743" width="5" height="19" fill="#00ff00" />
<rect x="442" y="743" width="5" height="22" fill="#00ff00" />
<rect x="449" y="743" width="5" height="25" fill="#00ff00" />
<rect x="457" y="743" width="5" height="25" fill="#00ff00" />
<rect x="465" y="743" width="5" height="25" fill="#00ff00" />
<rect x="472" y="743" width="5" height="22" fill="#00ff00" />
<rect x="480" y="743" width="5" height="18" fill="#00ff00" />
<rect x="488" y="743" width="5" height="14" fill="#00ff00" />
<rect x="495" y="743" width="5" height="11" fill="#00ff00" />
<rect x="503" y="743" width="5" height="9" fill="#00ff00" />
<rect x="511" y="743" width="5" height="7" fill="#00ff00" />
<rect x="518" y="743" width="5" height="5" fill="#00ff00" />
<rect x="526" y="743" width="5" height="2" fill="#00ff00" />
<rect x="557" y="741" width="5" height="1" fill="#00ff00" />
<rect x="564" y="740" width="5" height="2" fill="#00ff00" />
<rect x="572" y="729" width="5" height="13" fill="#00ff00" />
<rect x="580" y="724" width="5" height="18" fill="#00ff00" />
<rect x="587" y="716" width="5" height="26" fill="#00ff00" />
<rect x="595" y="711" width="5" height="31" fill="#00ff00" />
<rect x="603" y="708" width="5" height="34" fill="#00ff00" />
<rect x="610" y="707" width="5" height="35" fill="#00ff00" />
<rect x="618" y="708" width="5" height="34" fill="#00ff00" />
<rect x="626" y="711" width="5" height="31" fill="#00ff00" />
<rect x="633" y="713" width="5" height="29" fill="#00ff00" />
<rect x="641" y="716" width="5" height="26" fill="#00ff00" />
<rect x="649" y="720" width="5" height="22" fill="#00ff00" />
<rect x="656" y="724" width="5" height="18" fill="#00ff00" />
<rect x="664" y="728" width="5" height="14" fill="#00ff00" />
<rect x="672" y="735" width="5" height="7" fill="#00ff00" />
<rect x="679" y="739" width="5" height="3" fill="#00ff00" />
<rect x="687" y="743" width="5" height="2" fill="#00ff00" />
<rect x="695" y="743" width="5" height="6" fill="#00ff00" />
<rect x="702" y="743" width="5" height="10" fill="#00ff00" />
<rect x="710" y="743" width="5" height="12" fill="#00ff00" />
<rect x="718" y="743" width="5" height="12" fill="#00ff00" />
<rect x="725" y="743" width="5" height="10" fill="#00ff00" />
<rect x="733" y="743" width="5" height="7" fill="#00ff00" />
<rect x="741" y="743" width="5" height="8" fill="#00ff00" />
<rect x="748" y="743" width="5" height="9" fill="#00ff00" />
<rect x="756" y="743" width="5" height="10" fill="#00ff00" />
<rect x="764" y="743" width="5" height="8" fill="#00ff00" />
<rect x="771" y="743" width="5" height="5" fill="#00ff00" />
<rect x="787" y="737" width="5" height="5" fill="#00ff00" />
<rect x="794" y="734" width="5" height="8" fill="#00ff00" />
<rect x="802" y="734" width="5" height="8" fill="#00ff00" />
<rect x="810" y="734" width="5" height="8" fill="#00ff00" />
<rect x="817" y="727" width="5" height="15" fill="#00ff00" />
<rect x="825" y="726" width="5" height="16" fill="#00ff00" />
<rect x="833" y="724" width="5" height="18" fill="#00ff00" />
<rect x="840" y="725" width="5" height="17" fill="#00ff00" />
<rect x="848" y="724" width="5" height="18" fill="#00ff00" />
<rect x="856" y="725" width="5" height="17" fill="#00ff00" />
<rect x="863" y="722" width="5" height="20" fill="#00ff00" />
<line x1="884.5" y1="691" x2="884.5" y2="811" stroke="#404040" stroke-width="1" />
<line x1="870" y1="742.5" x2="884" y2="742.5" stroke="#404040" stroke-width="1" />
<line x1="880" y1="697.5" x2="884" y2="697.5" stroke="#404040" stroke-width="1" />
<line x1="877" y1="704.5" x2="884" y2="704.5" stroke="#404040" stroke-width="1" />
<line x1="880" y1="712.5" x2="884" y2="712.5" stroke="#404040" stroke-width="1" />
<line x1="880" y1="719.5" x2="884" y2="719.5" stroke="#404040" stroke-width="1" />
<line x1="880" y1="727.5" x2="884" y2="727.5" stroke="#404040" stroke-width="1" />
<line x1="880" y1="734.5" x2="884" y2="734.5" stroke="#404040" stroke-width="1" />
<line x1="880" y1="750.5" x2="884" y2="750.5" stroke="#404040" stroke-width="1" />
<line x1="880" y1="757.5" x2="884" y2="757.5" stroke="#404040" stroke-width="1" />
<line x1="880" y1="765.5" x2="884" y2="765.5" stroke="#404040" stroke-width="1" />
<line x1="880" y1="772.5" x2="884" y2="772.5" stroke="#404040" stroke-width="1" />
<line x1="877" y1="780.5" x2="884" y2="780.5" stroke="#404040" stroke-width="1" />
<line x1="880" y1="787.5" x2="884" y2="787.5" stroke="#404040" stroke-width="1" />
<line x1="880" y1="795.5" x2="884" y2="795.5" stroke="#404040" stroke-width="1" />
<line x1="880" y1="802.5" x2="884" y2="802.5" stroke="#404040" stroke-width="1" />
<line x1="880" y1="810.5" x2="884" y2="810.5" stroke="#404040" stroke-width="1" />
</g>
<polyline fill="none" stroke="#ff0000" stroke-width="1" shape-rendering="crispEdges" points="0.0,727.4 10.2,727.9 25.5,729.6 35.7,731.8 52.7,736.4 61.1,735.2 76.4,736.4 84.9,733.9 95.1,736.4 103.6,738.1 115.5,739.8 125.7,744.1 135.9,747.8 144.4,748.3 150.0,751.2 151.2,751.7 160.2,755.1 169.5,758.1 175.5,756.8 183.1,750.8 190.8,746.3 198.4,743.7 206.1,740.3 213.7,733.9 221.3,729.6 229.0,725.7 236.6,728.8 244.3,732.2 251.9,734.7 259.6,740.7 267.2,746.1 275.7,744.1 284.2,740.7 294.4,738.1 300.0,740.7 302.9,741.0 310.2,743.7 318.7,745.4 327.2,746.6 334.0,744.9 342.5,744.1 351.0,745.7 359.4,747.4 367.9,748.3 376.4,747.8 381.5,745.7 393.4,744.6 401.9,745.4 410.4,747.4 420.6,751.7 427.4,759.3 435.9,771.2 444.4,778.0 450.0,783.5 452.9,785.7 458.5,789.1 475.5,797.6 492.5,801.5 506.1,804.3 517.9,806.6 533.2,803.2 545.1,802.6 551.9,804.3 567.2,801.0 582.5,781.4 596.1,762.7 600.0,756.3 608.5,746.6 617.0,738.6 628.0,732.2 637.4,723.7 651.0,717.7 659.4,715.2 667.9,715.2 678.1,718.2 688.3,724.5 701.9,730.5 712.1,735.6 722.3,737.3 735.9,737.6 740.0,739.3 746.1,742.7 750.2,744.1 758.7,748.3 766.3,750.8 779.1,743.2 796.1,734.2 813.0,734.2 819.8,722.8 835.1,714.3 845.3,709.2 857.2,703.3 865.7,696.2 869.1,696.2"/>
<polyline fill="none" stroke="#0000ff" stroke-width="1" shape-rendering="crispEdges" points="0.0,732.5 8.5,730.5 25.5,729.1 49.3,729.3 59.4,731.8 74.7,733.5 86.6,733.9 103.6,736.4 118.9,737.6 135.9,739.8 147.8,742.7 150.0,742.7 160.2,745.4 169.5,748.3 178.9,750.8 199.3,751.7 217.9,747.1 228.1,742.4 236.6,738.6 245.1,735.2 253.6,734.2 270.6,734.2 285.9,736.4 299.5,738.1 300.0,738.6 310.2,741.5 325.5,743.2 351.0,743.7 364.5,744.9 373.0,746.6 384.9,745.7 401.9,746.1 418.9,747.1 429.1,748.8 439.3,752.2 449.5,757.6 450.0,756.8 467.0,767.0 492.5,788.2 509.4,795.9 531.5,801.0 545.1,802.6 568.9,803.5 579.1,800.1 594.4,791.6 600.0,789.6 617.0,773.8 634.0,755.1 642.5,749.1 659.4,731.8 671.3,726.2 684.9,721.1 698.5,720.3 712.1,722.3 727.4,727.4 740.0,731.3 744.4,732.5 753.6,736.4 765.5,740.7 774.0,742.4 791.0,743.2 807.9,742.4 818.1,739.8 835.1,730.5 850.4,722.0 869.1,714.3"/>
<text x="7.8" y="702" font-size="11" fill="#ff0000" text-anchor="start" textLength="130.0" lengthAdjust="spacingAndGlyphs" >MACD(EUR/USD.Close,</text>
<text x="144.5" y="702" font-size="11" fill="#ff0000" text-anchor="start" textLength="65.6" lengthAdjust="spacingAndGlyphs" >12, 26, 9) -</text>
<text x="218.2" y="702" font-size="11" fill="#ff0000" text-anchor="start" textLength="39.2" lengthAdjust="spacingAndGlyphs" >MACD:</text>
<text x="261.5" y="702" font-size="11" fill="#ff0000" text-anchor="start" textLength="46.2" lengthAdjust="spacingAndGlyphs" >0.00015</text>
<text x="315.8" y="702" font-size="11" fill="#0000ff" text-anchor="start" textLength="49.9" lengthAdjust="spacingAndGlyphs" >SIGNAL:</text>
<text x="369.4" y="702" font-size="11" fill="#0000ff" text-anchor="start" textLength="45.5" lengthAdjust="spacingAndGlyphs" >0.00027</text>
<text x="423.3" y="702" font-size="11" fill="#00ee00" text-anchor="start" textLength="74.9" lengthAdjust="spacingAndGlyphs" >HISTOGRAM:</text>
<text x="503.5" y="702" font-size="11" fill="#00ee00" text-anchor="start" textLength="50.7" lengthAdjust="spacingAndGlyphs" >-0.00013</text>
<text x="887.5" y="746" font-size="11" fill="#2c2c72" text-anchor="start" textLength="45" lengthAdjust="spacingAndGlyphs" >0.00000</text>
<g shape-rendering="crispEdges">
<line x1="0" y1="826.5" x2="869" y2="826.5" stroke="#000000" stroke-width="1" />
<line x1="0" y1="881.5" x2="869" y2="881.5" stroke="#000000" stroke-width="1" />
<line x1="0" y1="935.5" x2="869" y2="935.5" stroke="#000000" stroke-width="1" />
<line x1="870" y1="881.5" x2="884" y2="881.5" stroke="#404040" stroke-width="1" />
<line x1="884.5" y1="821" x2="884.5" y2="938" stroke="#404040" stroke-width="1" />
<line x1="880" y1="826.5" x2="884" y2="826.5" stroke="#404040" stroke-width="1" />
<line x1="880" y1="840.5" x2="884" y2="840.5" stroke="#404040" stroke-width="1" />
<line x1="880" y1="854.5" x2="884" y2="854.5" stroke="#404040" stroke-width="1" />
<line x1="880" y1="867.5" x2="884" y2="867.5" stroke="#404040" stroke-width="1" />
<line x1="880" y1="881.5" x2="884" y2="881.5" stroke="#404040" stroke-width="1" />
<line x1="880" y1="894.5" x2="884" y2="894.5" stroke="#404040" stroke-width="1" />
<line x1="880" y1="908.5" x2="884" y2="908.5" stroke="#404040" stroke-width="1" />
<line x1="880" y1="922.5" x2="884" y2="922.5" stroke="#404040" stroke-width="1" />
<line x1="880" y1="935.5" x2="884" y2="935.5" stroke="#404040" stroke-width="1" />
<rect x="887" y="821" width="21" height="13" fill="#a6a6a6" />
<rect x="887" y="876" width="7" height="13" fill="#a6a6a6" />
<rect x="887" y="930" width="26" height="12" fill="#a6a6a6" />
</g>
<polyline fill="none" stroke="#1e8cff" stroke-width="1" shape-rendering="crispEdges" points="0.0,860.0 7.5,874.3 14.5,871.4 22.5,872.4 30.5,873.3 37.5,880.0 45.5,883.8 53.5,909.3 60.5,900.1 68.5,899.1 76.5,884.0 83.5,869.5 91.5,887.1 99.5,881.9 106.5,883.3 114.5,877.5 122.5,887.7 129.5,898.2 137.5,899.1 145.5,896.3 152.5,915.0 160.5,908.7 168.5,917.3 175.5,894.0 183.5,870.5 191.5,868.0 198.5,871.4 206.5,863.4 214.5,860.0 221.5,848.5 229.5,846.2 237.5,864.7 244.5,877.2 252.5,893.4 260.5,900.1 267.5,896.6 275.5,884.4 283.5,889.0 290.5,890.1 298.5,891.1 306.5,891.1 313.5,883.3 321.5,884.2 329.5,868.6 336.5,863.4 344.5,880.0 352.5,903.0 359.5,898.6 367.5,897.2 375.5,868.6 382.5,866.1 390.5,874.3 398.5,875.6 405.5,897.2 413.5,897.2 421.5,896.3 428.5,911.5 436.5,916.3 444.5,916.3 451.5,926.5 459.5,925.3 467.5,926.5 474.5,926.5 482.5,924.0 490.5,921.1 497.5,918.2 505.5,910.6 513.5,928.4 520.5,926.8 528.5,907.3 536.5,908.3 543.5,905.4 551.5,918.2 559.5,899.1 566.5,897.2 574.5,865.7 582.5,864.2 589.5,856.5 597.5,857.5 605.5,851.4 612.5,853.3 620.5,840.5 628.5,845.0 635.5,839.3 643.5,853.3 651.5,847.5 658.5,857.1 666.5,869.5 674.5,883.8 681.5,880.6 689.5,898.2 697.5,890.5 704.5,918.2 712.5,915.8 720.5,906.2 727.5,906.2 735.5,893.4 743.5,899.7 750.5,903.3 758.5,894.0 766.5,897.2 773.5,872.4 781.5,862.2 789.5,864.2 796.5,865.7 804.5,878.7 812.5,861.9 819.5,841.2 827.5,854.2 835.5,853.3 842.5,857.7 850.5,860.3 858.5,859.1 865.5,855.5 869.0,855.5"/>
<text x="8.1" y="832.5" font-size="11" fill="#1e8cff" text-anchor="start" textLength="124.3" lengthAdjust="spacingAndGlyphs" >CMO(EUR/USD.Close,</text>
<text x="137.1" y="832.5" font-size="11" fill="#1e8cff" text-anchor="start" textLength="16.3" lengthAdjust="spacingAndGlyphs" >9):</text>
<text x="159.1" y="832.5" font-size="11" fill="#1e8cff" text-anchor="start" textLength="35.9" lengthAdjust="spacingAndGlyphs" >-25.00</text>
<text x="887.5" y="832" font-size="11" fill="#202040" text-anchor="start" textLength="20" lengthAdjust="spacingAndGlyphs" >100</text>
<text x="887.5" y="887" font-size="11" fill="#202040" text-anchor="start" textLength="6.5" lengthAdjust="spacingAndGlyphs" >0</text>
<text x="887.5" y="941" font-size="11" fill="#202040" text-anchor="start" textLength="25" lengthAdjust="spacingAndGlyphs" >-100</text>
</svg>
</body></html>
